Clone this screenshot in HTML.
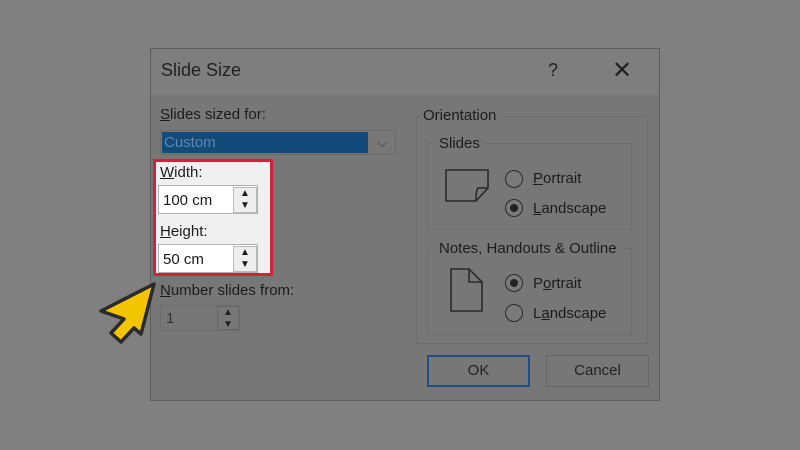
<!DOCTYPE html>
<html><head><meta charset="utf-8"><style>
*{margin:0;padding:0;box-sizing:border-box}
body{width:800px;height:450px;background:#808080;font-family:"Liberation Sans",sans-serif;position:relative;overflow:hidden;color:#1a1a1a}
.a{position:absolute}
.t{font-size:15px;color:#1c1c1c}
.u{text-decoration:underline}
.box{border:1px solid #6c6c6c}
.rad{width:18px;height:18px;border:1.5px solid #2a2a2a;border-radius:50%;background:#7a7a7a}
.rad.on::after{content:"";position:absolute;left:3.5px;top:3.5px;width:8px;height:8px;border-radius:50%;background:#222}
.spin{width:24px;height:26px;border:1px solid #bbb;background:#eee}
</style></head><body>
<div class="a" style="left:150px;top:48px;width:510px;height:353px;background:#777;border:1px solid #5e5e5e"></div>
<div class="a" style="left:151px;top:49px;width:508px;height:46px;background:#7e7e7e"></div>
<div class="a" style="left:161px;top:60px;font-size:18px;color:#222">Slide Size</div>
<div class="a" style="left:548px;top:60px;font-size:18px;color:#222">?</div>
<div class="a" style="left:612px;top:56px;font-size:24px;color:#222">✕</div>

<div class="a t" style="left:160px;top:106px"><span class="u">S</span>lides sized for:</div>
<div class="a" style="left:160px;top:130px;width:236px;height:25px;border:1px solid #6a6a6a;background:#777"></div>
<div class="a" style="left:162px;top:132px;width:206px;height:21px;background:#144a7a;color:#5e87b0;font-size:15px;padding:2px 0 0 2px">Custom</div>
<div class="a" style="left:377px;top:134px;font-size:14px;color:#444">⌵</div>

<div class="a" style="left:153px;top:159px;width:120px;height:117px;border:3px solid #d0233a;background:#f0f0f0"></div>
<div class="a t" style="left:160px;top:164px"><span class="u">W</span>idth:</div>
<div class="a" style="left:158px;top:185px;width:100px;height:29px;border:1px solid #b0b0b0;background:#fff;font-size:15px;padding:6px 0 0 4px">100 cm</div>
<div class="a spin" style="left:233px;top:187px;font-size:10px;text-align:center;line-height:12px">▲<br>▼</div>
<div class="a t" style="left:160px;top:223px"><span class="u">H</span>eight:</div>
<div class="a" style="left:158px;top:244px;width:100px;height:29px;border:1px solid #b0b0b0;background:#fff;font-size:15px;padding:6px 0 0 4px">50 cm</div>
<div class="a spin" style="left:233px;top:246px;font-size:10px;text-align:center;line-height:12px">▲<br>▼</div>

<div class="a t" style="left:160px;top:282px"><span class="u">N</span>umber slides from:</div>
<div class="a box" style="left:160px;top:305px;width:80px;height:26px;color:#333;font-size:15px;padding:4px 0 0 5px">1</div>
<div class="a" style="left:217px;top:306px;width:22px;height:24px;border:1px solid #666;font-size:10px;text-align:center;line-height:12px;color:#222">▲<br>▼</div>

<div class="a box" style="left:416px;top:116px;width:232px;height:228px;border-color:#6e6e6e"></div>
<div class="a t" style="left:421px;top:107px;background:#777;padding:0 2px">Orientation</div>
<div class="a box" style="left:427px;top:143px;width:205px;height:87px;border-color:#6e6e6e"></div>
<div class="a t" style="left:436px;top:135px;background:#777;padding:0 3px">Slides</div>
<svg class="a" style="left:445px;top:168px" width="46" height="36"><path d="M1 2H43V20L31 33H1Z M43 20H33Q31 22 31 33" fill="none" stroke="#2a2a2a" stroke-width="1.6"/></svg>
<div class="a rad" style="left:505px;top:170px"></div>
<div class="a t" style="left:533px;top:170px"><span class="u">P</span>ortrait</div>
<div class="a rad on" style="left:505px;top:199px"></div>
<div class="a t" style="left:533px;top:200px"><span class="u">L</span>andscape</div>
<div class="a box" style="left:427px;top:248px;width:205px;height:87px;border-color:#6e6e6e"></div>
<div class="a t" style="left:436px;top:240px;background:#777;padding:0 3px">Notes, Handouts &amp; Outline</div>
<svg class="a" style="left:450px;top:268px" width="34" height="46"><path d="M1 1H19L32 14V43H1Z M19 1V14H32" fill="none" stroke="#2a2a2a" stroke-width="1.6"/></svg>
<div class="a rad on" style="left:505px;top:274px"></div>
<div class="a t" style="left:533px;top:275px">P<span class="u">o</span>rtrait</div>
<div class="a rad" style="left:505px;top:304px"></div>
<div class="a t" style="left:533px;top:305px">L<span class="u">a</span>ndscape</div>

<div class="a" style="left:427px;top:355px;width:103px;height:32px;border:2px solid #1f4f80;font-size:15px;text-align:center;line-height:28px;color:#222">OK</div>
<div class="a" style="left:546px;top:355px;width:103px;height:32px;border:1px solid #666;background:#777;font-size:15px;text-align:center;line-height:30px;color:#222">Cancel</div>

<svg class="a" style="left:0;top:0" width="800" height="450"><polygon points="154,284 101,311 124,319 111,333 121,342 134,328 141,334" fill="#f3c400" stroke="#2a2a2a" stroke-width="3.5" stroke-linejoin="round"/></svg>
</body></html>
